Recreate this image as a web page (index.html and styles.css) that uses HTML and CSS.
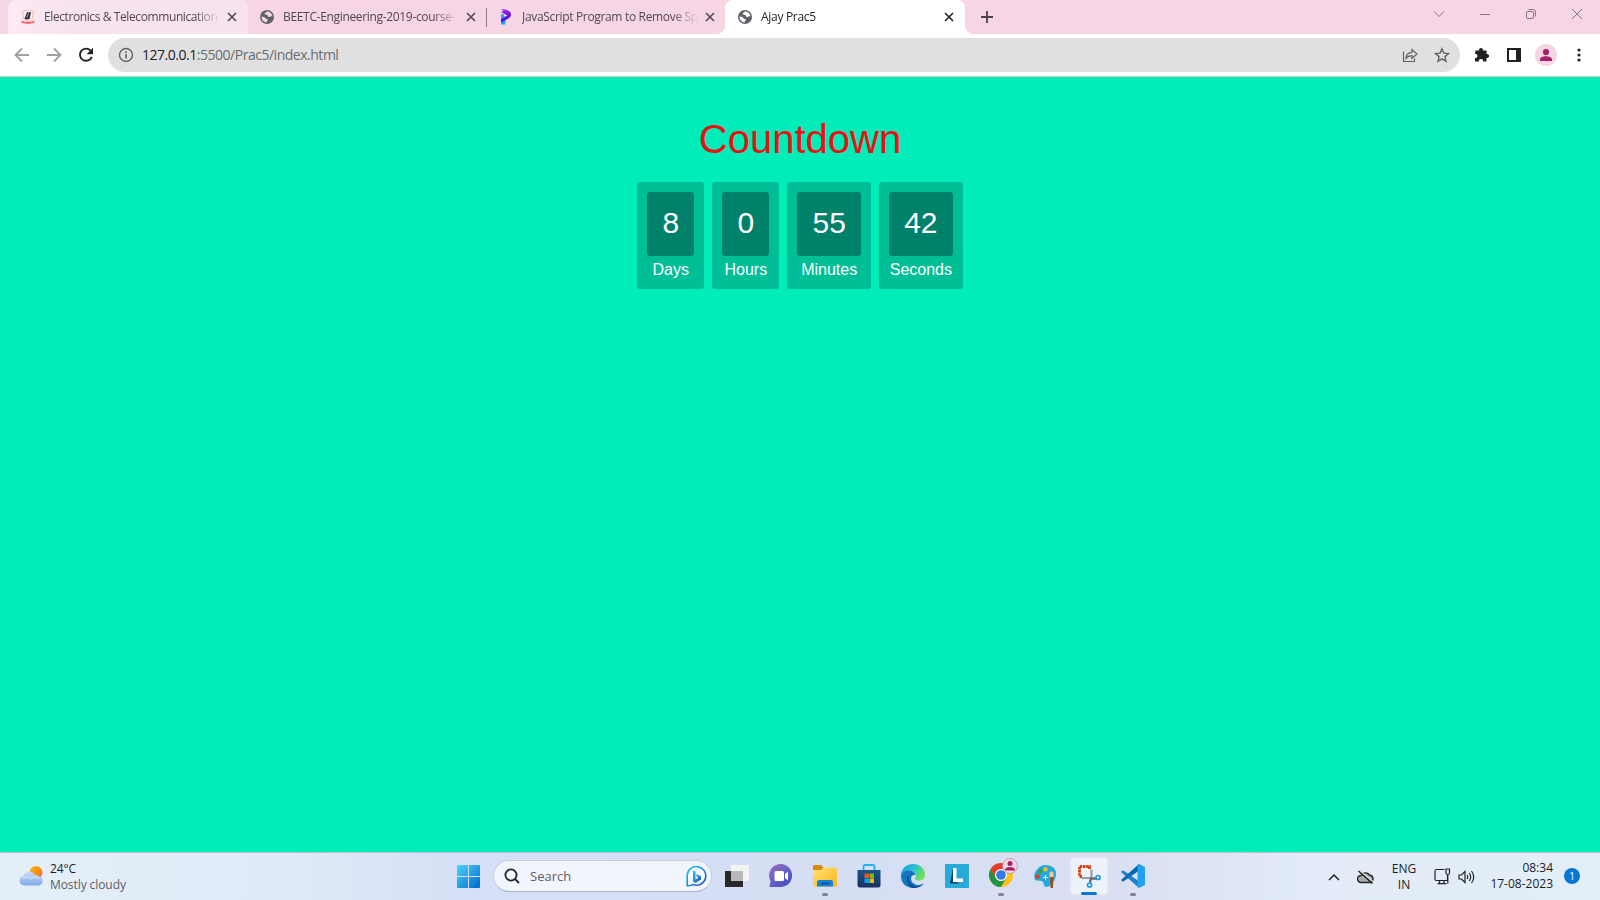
FILE: index.html
```html
<!DOCTYPE html>
<html lang="en">
<head>
<meta charset="utf-8">
<title>Ajay Prac5</title>
<link rel="stylesheet" href="styles.css">
</head>
<body>
<svg width="0" height="0" class="defs">
  <defs>
    <symbol id="globe" viewBox="0 0 14 14"><circle cx="7" cy="7" r="7" fill="#5f6368"/><path d="M1.600 6.600c2 .2 3.300.8 3.800 1.600.5.900 2.500.4 2.500 1.600 0 .9-1.300.9-1.300 2.700C3.500 12.400 1.300 9.600 1.600 6.600zM6.800 1.500c-.5 1.300-2 1-2.200 2.200-.1 1.100 1.700.6 2.700 1.200.9.600.4 1.800 1.800 2.100 1.200.2 1.600-.8 3.300-.6C12.200 3.600 9.800 1.400 6.800 1.500z" fill="currentColor"/></symbol>
    <symbol id="close" viewBox="0 0 10 10"><path d="M1 1l8 8M9 1l-8 8" stroke="currentColor" stroke-width="1.6"/></symbol>
    <linearGradient id="win" x2="1" y2="1"><stop offset="0" stop-color="#4dd4ff"/><stop offset="1" stop-color="#0068c8"/></linearGradient>
    <linearGradient id="folder" x2="1" y2="1"><stop offset="0" stop-color="#ffe17a"/><stop offset="1" stop-color="#fbb914"/></linearGradient>
    <linearGradient id="pfav" x2=".3" y2="1"><stop offset="0" stop-color="#a534f2"/><stop offset="1" stop-color="#4a00e0"/></linearGradient>
    <linearGradient id="store" x2="0" y2="1"><stop offset="0" stop-color="#17548a"/><stop offset="1" stop-color="#18325e"/></linearGradient>
    <linearGradient id="chat" x2=".8" y2="1"><stop offset="0" stop-color="#a66ab8"/><stop offset=".5" stop-color="#6961c5"/><stop offset="1" stop-color="#454fc2"/></linearGradient>
    <linearGradient id="edge" x2="1" y2=".4"><stop offset="0" stop-color="#1999de"/><stop offset=".55" stop-color="#29bfd3"/><stop offset="1" stop-color="#70e15b"/></linearGradient>
    <linearGradient id="cloud" x2="0" y2="1"><stop offset="0" stop-color="#cbdcf8"/><stop offset="1" stop-color="#84a9e8"/></linearGradient>
    <linearGradient id="bing" x2="1" y2="1"><stop offset="0" stop-color="#21c4ed"/><stop offset="1" stop-color="#2450c4"/></linearGradient>
    <linearGradient id="sun" x2="1" y2="1"><stop offset="0" stop-color="#ffb51e"/><stop offset="1" stop-color="#f06b12"/></linearGradient>
  </defs>
</svg>

<header class="tabs">
  <div class="tab hover">
    <svg class="fav" viewBox="0 0 14 14"><path d="M2 1l5-1 5 1-.5 8L7 12 2.500 9z" fill="#fbe9e8" stroke="#f2b3b0" stroke-width=".8"/><path d="M5.500 3.500l1-1.500 1 .5 2.500-.5-1.500 7-2.500.5-2.500-.5z" fill="#2c3036"/><path d="M6 7.500l1.500-4" stroke="#b7d8d5" stroke-width=".8"/><path d="M0 10.500l4 1.200h6l4-1.200-1 2.500-6 1-6-1z" fill="#ef6a6e"/></svg>
    <span class="label l1">Electronics &amp; Telecommunication</span>
    <svg class="x"><use href="#close"/></svg>
  </div>
  <div class="tab second">
    <svg class="fav globe"><use href="#globe"/></svg>
    <span class="label l2">BEETC-Engineering-2019-course-</span>
    <svg class="x"><use href="#close"/></svg>
  </div>
  <div class="tab third">
    <svg class="fav" viewBox="0 0 14 16"><path d="M2 5L5 5.500v3L2 10z" fill="#1aa8fa"/><path d="M2 10l4.500-3v6L6 15.500H2z" fill="#14a5f8"/><path d="M2 .3C7-.5 12 2 12 5.500c0 3-3.500 4.500-5.500 5.500L2 13.500V10L8.500 6.500 2 3.200 4.500 2z" fill="url(#pfav)"/></svg>
    <span class="label l3">JavaScript Program to Remove Sp</span>
    <svg class="x"><use href="#close"/></svg>
  </div>
  <div class="tab active">
    <svg class="fav globe"><use href="#globe"/></svg>
    <span class="label l4">Ajay Prac5</span>
    <svg class="x"><use href="#close"/></svg>
  </div>
  <svg class="plus" viewBox="0 0 12 12"><path d="M6 0v12M0 6h12" stroke="#4d444a" stroke-width="1.800"/></svg>
  <div class="window">
    <svg width="12" height="12" viewBox="0 0 12 12"><path d="M1 3.500l5 5 5-5"/></svg>
    <svg width="12" height="12" viewBox="0 0 12 12"><path d="M1 6.500h10"/></svg>
    <svg width="12" height="12" viewBox="0 0 12 12"><rect x="1.500" y="3.500" width="7" height="7" rx="1.500"/><path d="M3.500 1.500H8q2.500 0 2.500 2.500v4.500"/></svg>
    <svg width="12" height="12" viewBox="0 0 12 12"><path d="M1 1l10 10M11 1L1 11"/></svg>
  </div>
</header>

<nav class="toolbar">
  <div class="nav">
    <svg width="16" height="16" viewBox="0 0 16 16" stroke="#a0a0a3"><path d="M15 8H2M8 1.500L1.500 8 8 14.500"/></svg>
    <svg width="16" height="16" viewBox="0 0 16 16" stroke="#a0a0a3"><path d="M1 8h13M8 1.500L14.500 8 8 14.500"/></svg>
    <svg width="16" height="16" viewBox="0 0 16 16"><path d="M12.600 3.600A6.100 6.100 0 1 0 13.800 9.800" stroke="#202124"/><polygon points="15,.8 15,7.200 8.600,7.200" fill="#202124"/></svg>
  </div>
  <div class="omnibox">
    <svg width="16" height="16" viewBox="0 0 16 16"><circle cx="8" cy="8" r="6.500" fill="none" stroke="#5f6368" stroke-width="1.400"/><path d="M8 7v4.500M8 4.300v1.600" stroke="#5f6368" stroke-width="1.600"/></svg>
    <span class="url"><b>127.0.0.1</b>:5500/Prac5/index.html</span>
    <svg class="share" width="16" height="16" viewBox="0 0 16 16" fill="none" stroke="#5f6368" stroke-width="1.200"><path d="M1.500 4.500v10h11v-3M4 11.500c.2-4 2.500-6 6-6.200V2.500l5 4.500-5 4.500V8.600c-3 0-4.500 1-6 2.900z"/></svg>
    <svg width="16" height="16" viewBox="0 0 16 16" fill="none" stroke="#5f6368" stroke-width="1.400"><path d="M8 1.800l1.800 4.300 4.700.4-3.600 3.100 1.100 4.600L8 11.800l-4 2.400 1.100-4.600L1.500 6.500l4.700-.4z"/></svg>
  </div>
  <div class="actions">
    <svg width="16" height="16" viewBox="0 0 16 16"><path d="M1.500 3.500h3.600a2 2 0 1 1 3.800 0h3.600v3.600a2 2 0 1 1 0 3.800v3.600H9a2 2 0 1 0-3.900 0H1V11a2 2 0 1 0 0-3.900z" fill="#202124"/></svg>
    <svg width="14" height="14" viewBox="0 0 14 14"><path fill-rule="evenodd" d="M0 0h14v14H0zM2 2v10h7V2z" fill="#202124"/></svg>
    <svg width="22" height="22" viewBox="0 0 22 22"><circle cx="11" cy="11" r="11" fill="#f6d5e4"/><circle cx="11" cy="8" r="3.100" fill="#a82068"/><path d="M5 17v-1.500c0-2.200 3.500-3.300 6-3.300s6 1.100 6 3.300V17z" fill="#a82068"/></svg>
    <svg width="4" height="14" viewBox="0 0 4 14" fill="#202124"><circle cx="2" cy="2" r="1.600"/><circle cx="2" cy="7" r="1.600"/><circle cx="2" cy="12" r="1.600"/></svg>
  </div>
</nav>

<main class="page">
  <h1>Countdown</h1>
  <div class="clock">
    <div class="unit"><span>8</span><p>Days</p></div>
    <div class="unit"><span>0</span><p>Hours</p></div>
    <div class="unit"><span>55</span><p>Minutes</p></div>
    <div class="unit"><span>42</span><p>Seconds</p></div>
  </div>
</main>

<footer class="taskbar">
  <div class="weather">
    <svg width="24" height="20" viewBox="0 0 24 20"><circle cx="17" cy="6.500" r="6.500" fill="url(#sun)"/><path d="M5 19.500a4.800 4.800 0 0 1-.5-9.500A6 6 0 0 1 15.500 8.500 5.500 5.500 0 0 1 19.500 10a4.800 4.800 0 0 1 0 9.500z" fill="url(#cloud)"/><path d="M3 13q5-4 9 0 4-4 8 0" fill="none" stroke="#e5effd" opacity=".7"/></svg>
    <div><div class="temp">24°C</div><div class="cond">Mostly cloudy</div></div>
  </div>
  <div class="apps">
    <div class="cell start"><svg width="23" height="23" viewBox="0 0 23 23"><path d="M0 1q0-1 1-1h10v11H0zM12 0h10q1 0 1 1v10H12zM0 12h11v11H1q-1 0-1-1zM12 12h11v10q0 1-1 1H12z" fill="url(#win)"/></svg></div>
    <div class="search">
      <svg width="16" height="16" viewBox="0 0 16 16" fill="none" stroke="#252529" stroke-width="1.800"><circle cx="7" cy="7" r="5.600"/><path d="M11 11l4 4"/></svg>
      <span>Search</span>
      <svg width="21" height="21" viewBox="0 0 21 21"><path d="M1.200 19.800V10A9.300 9.300 0 1 1 7 18.500q-2.500 1.300-5.800 1.300z" fill="#f5fbff" stroke="url(#bing)" stroke-width="1.600"/><path d="M7 4.500l2.500 1v8l3-1.800-1.500-1L10 8l5 2.200v3.200L9.500 17 7 15.500z" fill="url(#bing)"/></svg>
    </div>
    <div class="cell"><svg width="24" height="23" viewBox="0 0 24 23"><path d="M0 6h18v16H0z" fill="#292929"/><path d="M6 0h18v16H6z" fill="#f4f4f4"/><path d="M6 6h12v10H6z" fill="#b9b9b9"/></svg></div>
    <div class="cell"><svg width="24" height="24" viewBox="0 0 24 24"><path d="M.5 22.500l1-5.500A11.500 11.500 0 1 1 12 23H1q-.6 0-.5-.5z" fill="url(#chat)"/><rect x="5.500" y="7" width="9.500" height="10" rx="1.500" fill="#fff"/><path d="M16 10l3-2.200v8.400L16 14z" fill="#fff"/></svg></div>
    <div class="cell run"><svg width="24" height="24" viewBox="0 0 24 24"><path d="M0 4V2.500Q0 1 1.500 1H8l2.500 2.500L8 7H0z" fill="#d48b0b"/><path d="M0 6h8l2.500-2.500H22.500Q24 3.500 24 5v16q0 1.500-1.500 1.500h-21Q0 22.500 0 21z" fill="url(#folder)"/><path d="M4 22.500v-4.500q0-2 2-2h12q2 0 2 2v4.500z" fill="#1681cf"/><path d="M8 19.500h8" stroke="#0b4d96" stroke-width="1.500"/></svg></div>
    <div class="cell"><svg width="24" height="24" viewBox="0 0 24 24"><path d="M6.500 6V2.500Q6.500 1 8 1h8q1.500 0 1.500 1.500V6" fill="none" stroke="#27b0ee" stroke-width="1.800"/><path d="M.5 6h23v15q0 2.500-2.500 2.500H3Q.5 23.500.5 21z" fill="url(#store)"/><path d="M7.500 9.500H12V14H7.500z" fill="#f25022"/><path d="M12.500 9.500H17V14h-4.500z" fill="#7fba00"/><path d="M7.500 14.500H12V19H7.500z" fill="#00a4ef"/><path d="M12.500 14.500H17V19h-4.500z" fill="#ffb900"/></svg></div>
    <div class="cell"><svg width="24" height="24" viewBox="0 0 24 24"><path d="M0 12C0 4 6 0 12 0c7 0 12 4.500 12 10.500 0 4-3 6-6 6-2.500 0-4-.8-4-2 0-.8 1-1.200 1-2.800C15 9 12 6.500 8.500 6.500 4 6.500.5 9.500 0 12z" fill="url(#edge)"/><path d="M0 12c.5-3.500 4-5.500 8-5.500 4 0 6.500 2.500 6.500 5.200-.3-1.200-3-1-4 1-2 4.200 3 8.800 7.500 8.300q2-.2 4.500-1.500C20 23 16 24 12 24 5 24 0 19 0 12z" fill="#1474c4"/><path d="M8.500 10.500C6 15 9 22.500 16 22.500q3.500 0 6.500-3C20 23 16 24 12 24 7 23 4 15 8.500 10.500z" fill="#114a8c"/></svg></div>
    <div class="cell"><svg width="24" height="24" viewBox="0 0 24 24"><path d="M0 0h24v24H0z" fill="#29abd9"/><path d="M8 4L5 19.500h10L8 17z" fill="#123e60"/><path d="M8 4h3.500v10.500H18V18H8z" fill="#fff"/></svg></div>
    <div class="cell run"><svg class="chrome" width="30" height="30" viewBox="0 0 30 30"><circle cx="13" cy="17" r="12" fill="#fbc116"/><path d="M2.600 11A12 12 0 0 1 23.400 11H13a6 6 0 0 0-5.500 8.500z" fill="#e33b2e"/><path d="M2.600 11A12 12 0 0 0 13 29l5.200-9A6 6 0 0 1 7.800 20z" fill="#229342"/><circle cx="13" cy="17" r="6" fill="#fff"/><circle cx="13" cy="17" r="4.800" fill="#3279e8"/><circle cx="22" cy="8" r="7.500" fill="#f6d5e4" stroke="#a0929f" stroke-width=".7"/><circle cx="22" cy="5.500" r="2.500" fill="#a82068"/><path d="M17 12.500V11q1.500-2 5-2t5 2v1.500z" fill="#a82068"/></svg></div>
    <div class="cell"><svg width="24" height="24" viewBox="0 0 24 24"><path d="M1.500 15C0 8 6 1 12.500 1 19 1 23 5 23 9.500c0 4-1 6-3 8.500-1.500 2-3 5-6.500 5-3.500 0-2-4-4-5.500-3-1.500-5 .5-8-2.500z" fill="#25a7df"/><circle cx="4.500" cy="12.500" r="2.200" fill="#d9421f"/><circle cx="7.500" cy="7.500" r="2.200" fill="#4a9c28"/><circle cx="12.500" cy="5.200" r="2.200" fill="#f7bf20"/><path d="M12.500 11v5M10 13.500h5" stroke="#d8f6ff"/><path d="M16.500 8.500l2-1.500 2 1.500V14h-4z" fill="#efc995"/><path d="M17 13h3.500l-.5 11h-2.500z" fill="#93521e"/></svg></div>
    <div class="cell current"><svg width="24" height="24" viewBox="0 0 24 24"><path d="M5 12.500H2.500V2.500H12.500V5" fill="none" stroke="#d83b12" stroke-width="2.800" stroke-dasharray="2.500 .7"/><path d="M4.500 14h10.500M14.500 5.500v8" fill="none" stroke="#9a9da1" stroke-width="2.200"/><path d="M14 13.500l-1 5M14 14.500h6" fill="none" stroke="#686c70" stroke-width="2.400"/><circle cx="12.500" cy="21" r="2" fill="#fff" stroke="#1998dc" stroke-width="1.700"/><circle cx="21" cy="13.500" r="2" fill="#fff" stroke="#1998dc" stroke-width="1.700"/></svg></div>
    <div class="cell run"><svg width="24" height="24" viewBox="0 0 24 24"><path d="M0 8l2-1.800L19 18l-1 6z" fill="#1783cf"/><path d="M0 16l2 1.800L19 6 18 0z" fill="#0869b3"/><path d="M18 0l6 3v18l-6 3-1.500-1V1z" fill="#25a0ec"/></svg></div>
  </div>
  <div class="tray">
    <svg class="up" width="12" height="8" viewBox="0 0 12 8"><path d="M1 7l5-5 5 5" fill="none" stroke="#222" stroke-width="1.500"/></svg>
    <svg class="drive" width="17" height="14" viewBox="0 0 17 14"><path d="M4 12.500a3.500 3.500 0 0 1 0-7A5 5 0 0 1 12.500 5a3.800 3.800 0 0 1 .5 7.500z" fill="#a9abad" stroke="#222" stroke-width="1.400"/><path d="M2 0l14.500 12" stroke="#e3ecf7" stroke-width="1.200"/><path d="M1.500 1l14 12.500" stroke="#222" stroke-width="1.500"/></svg>
    <div class="lang"><div>ENG</div><div>IN</div></div>
    <svg class="net" width="17" height="17" viewBox="0 0 17 17" fill="none" stroke="#222" stroke-width="1.200"><path d="M10.500 1.500h-8q-1.500 0-1.500 1.500v8q0 1.500 1.500 1.500h11V7M5.500 12.500v3M10 12.500v3M3.500 15.700h9M12 1h3.500v4q0 1.500-1.700 1.500T12 5zM13.800 6.500v9"/></svg>
    <svg class="sound" width="17" height="14" viewBox="0 0 17 14" fill="none" stroke="#222" stroke-width="1.200"><path d="M1 5h2.500L7 1.500v11L3.500 9H1zM9 5q1.500 2 0 4M11.200 3q3 4 0 8M13.500 1q4.500 6 0 12"/></svg>
    <div class="time"><div>08:34</div><div class="date">17-08-2023</div></div>
    <div class="badge">1</div>
  </div>
</footer>
</body>
</html>
```

FILE: styles.css
```css
* { box-sizing: border-box; }
body {
  margin: 0;
  width: 1600px;
  height: 900px;
  overflow: hidden;
  display: flex;
  flex-direction: column;
  font-family: "Open Sans", "Noto Sans", sans-serif;
}
svg { display: block; flex: none; }
.defs { position: absolute; }

/* Tab strip */
.tabs {
  height: 34px;
  flex: none;
  background: #f6d5e4;
  display: flex;
  padding-left: 8px;
}
.tab {
  width: 239px;
  height: 34px;
  padding: 0 11px 0 12px;
  display: flex;
  align-items: center;
  color: #51484d;
}
.tab.hover { background: linear-gradient(90deg, #faeaf2, #f8e2ed 30%); border-radius: 8px 8px 0 0; width: 240px; padding: 0 11px 0 13px; }
.tab.third { position: relative; width: 238px; padding-right: 10px; }
.tab.third::before { content: ""; position: absolute; left: -1px; top: 8px; width: 1px; height: 19px; background: #8d7b84; }
.tab.active { position: relative; background: #fff; border-radius: 8px 8px 0 0; color: #242427; width: 240px; padding-left: 13px; }
.tab.active::before, .tab.active::after {
  content: ""; position: absolute; bottom: 0; width: 8px; height: 8px;
}
.tab.active::before { left: -8px; background: radial-gradient(circle at 0 0, transparent 7.5px, #fff 8px); }
.tab.active::after { right: -8px; background: radial-gradient(circle at 100% 0, transparent 7.5px, #fff 8px); }
.fav { width: 14px; height: 14px; }
.globe { color: #f6d5e4; }
.active .globe { color: #fff; }
.third .fav { height: 16px; }
.label {
  flex: 1;
  min-width: 0;
  margin: 0 6px 0 9px;
  height: 18px;
  font-size: 12px;
  line-height: 18px;
  white-space: nowrap;
  mask-image: linear-gradient(90deg, #000 calc(100% - 26px), transparent calc(100% - 1px));
}
.l1 { letter-spacing: -.4px; }
.l2 { letter-spacing: -.33px; }
.l3 { letter-spacing: -.33px; }
.l4 { letter-spacing: -.3px; }
.x { width: 10px; height: 10px; }
.plus { width: 12px; height: 12px; margin: 11px 0 0 16px; }
.window { margin: 8px 17px 0 auto; display: flex; gap: 34px; }
.window svg { fill: none; stroke: #8a747f; }

/* Toolbar */
.toolbar {
  height: 43px;
  flex: none;
  background: #fff;
  border-bottom: 1px solid #c7d2ce;
  display: flex;
  align-items: center;
}
.nav { display: flex; gap: 16px; padding-left: 14px; width: 108px; }
.nav path { fill: none; stroke-width: 1.9; }
.omnibox {
  width: 1352px;
  height: 34px;
  border-radius: 17px;
  background: #e0e0e0;
  display: flex;
  align-items: center;
  padding: 0 10px;
}
.url { margin: -1px 0 0 8px; font-size: 14px; letter-spacing: -.48px; color: #6a6d70; }
.url b { font-weight: 400; color: #202124; }
.share { margin: 0 16px 0 auto; }
.actions { display: flex; align-items: center; width: 140px; padding-left: 14px; }
.actions svg:nth-child(2) { margin: 0 14px 0 17px; }
.actions svg:nth-child(4) { margin-left: 20px; }

/* Countdown page */
.page {
  flex: 1;
  background: #00ecb9;
  font-family: "Liberation Sans", Arial, sans-serif;
  text-align: center;
  padding-top: 40px;
}
h1 { margin: 0 0 20px; font-size: 40px; line-height: 45px; font-weight: 400; color: #e81212; }
.clock { display: flex; justify-content: center; gap: 8.33px; color: #fff; }
.unit { background: #00bf96; border-radius: 3px; padding: 10px; }
.unit span { display: block; padding: 14px 15px 16px; border-radius: 3px; background: #00816a; font-size: 30px; line-height: 34px; }
.unit p { margin: 5px -10px 0; font-size: 16px; line-height: 18px; }

/* Taskbar */
.taskbar {
  height: 48px;
  flex: none;
  border-top: 1px solid #aac6cd;
  background: linear-gradient(90deg, #e4eff8 0, #e1ebf8 16%, #d5dff6 30%, #d6def4 50%, #d9e0f3 70%, #e2ebf7 82%, #e3eef8 100%);
  display: grid;
  grid-template-columns: 446px 710px 444px;
  font-size: 12px;
  color: #1d1d20;
}
.weather { display: flex; padding: 8px 0 0 19px; gap: 7px; line-height: 16px; }
.weather svg { margin-top: 5px; }
.temp { letter-spacing: -.1px; }
.cond { color: #5b6066; letter-spacing: -.08px; }
.apps { display: flex; align-items: center; }
.cell { width: 44px; height: 47px; padding-bottom: 1px; display: flex; align-items: center; justify-content: center; position: relative; }
.chrome { margin: -6px 0 0 4px; }
.run::after { content: ""; position: absolute; left: 19px; bottom: 4px; width: 6px; height: 3px; border-radius: 2px; background: #7f8592; }
.current::before { content: ""; position: absolute; inset: 4px 3px 5px; background: #edf1fa; border: 1px solid #e2e7f2; border-radius: 4px; }
.current svg { position: relative; }
.current::after { content: ""; position: absolute; left: 14px; bottom: 5px; width: 16px; height: 3px; border-radius: 2px; background: #0877d4; }
.search {
  width: 219px;
  height: 32px;
  margin: -1px 3px 0 3px;
  border-radius: 16px;
  background: #f2f5fc;
  border: 1px solid #c5cfe4;
  border-bottom-color: #a9b6d0;
  display: flex;
  align-items: center;
  padding: 0 4px 0 10px;
}
.search span { flex: 1; margin-left: 10px; font-size: 13px; color: #5e6066; }
.tray { position: relative; display: flex; align-items: center; padding-left: 172px; }
.drive { margin-left: 17px; }
.lang { width: 36px; margin: 1px 0 0 12px; text-align: center; line-height: 16px; }
.net { margin-left: 12px; margin-top: -1px; }
.sound { margin-left: 7px; }
.time { width: 73px; margin-left: 5px; text-align: right; line-height: 16px; margin-top: -1px; }
.badge { width: 16px; height: 16px; margin: -1px 0 0 11px; border-radius: 50%; background: #0877d4; color: #fff; font-size: 10px; line-height: 16px; text-align: center; }
```
